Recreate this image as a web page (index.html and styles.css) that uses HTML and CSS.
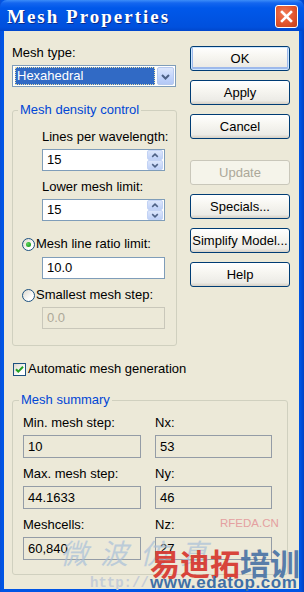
FILE: index.html
```html
<!DOCTYPE html>
<html>
<head>
<meta charset="utf-8">
<link rel="stylesheet" href="styles.css">
</head>
<body>
<div class="window">
  <div class="titlebar">
    <span class="title">Mesh Properties</span>
    <span class="close"><svg width="21" height="21" viewBox="0 0 21 21"><path d="M6 6 L15 15 M15 6 L6 15" stroke="#fff" stroke-width="2.6" stroke-linecap="square"/></svg></span>
  </div>
  <div class="client">
    <div class="top">
      <div class="left">
        <div class="label">Mesh type:</div>
        <div class="combo">
          <span class="combo-sel">Hexahedral</span>
          <span class="combo-btn"><svg width="15" height="17" viewBox="0 0 15 17"><path d="M4 7 L7.5 10.5 L11 7" fill="none" stroke="#4D6185" stroke-width="2"/></svg></span>
        </div>
        <fieldset class="group density">
          <legend>Mesh density control</legend>
          <div class="label ind">Lines per wavelength:</div>
          <div class="edit spin ind"><span class="val">15</span>
            <span class="spinbtns">
              <span class="sb"><svg width="15" height="9" viewBox="0 0 15 9"><path d="M4.5 6 L7.5 3 L10.5 6" fill="none" stroke="#4D6185" stroke-width="1.6"/></svg></span>
              <span class="sb"><svg width="15" height="9" viewBox="0 0 15 9"><path d="M4.5 3 L7.5 6 L10.5 3" fill="none" stroke="#4D6185" stroke-width="1.6"/></svg></span>
            </span>
          </div>
          <div class="label ind gap8">Lower mesh limit:</div>
          <div class="edit spin ind"><span class="val">15</span>
            <span class="spinbtns">
              <span class="sb"><svg width="15" height="9" viewBox="0 0 15 9"><path d="M4.5 6 L7.5 3 L10.5 6" fill="none" stroke="#4D6185" stroke-width="1.6"/></svg></span>
              <span class="sb"><svg width="15" height="9" viewBox="0 0 15 9"><path d="M4.5 3 L7.5 6 L10.5 3" fill="none" stroke="#4D6185" stroke-width="1.6"/></svg></span>
            </span>
          </div>
          <div class="radio-row gap15"><span class="radio on"><span class="dot"></span></span><span>Mesh line ratio limit:</span></div>
          <div class="edit ind gap5"><span class="val">10.0</span></div>
          <div class="radio-row gap8"><span class="radio"></span><span>Smallest mesh step:</span></div>
          <div class="edit disabled ind"><span class="val">0.0</span></div>
        </fieldset>
      </div>
      <div class="buttons">
        <div class="btn default">OK</div>
        <div class="btn">Apply</div>
        <div class="btn">Cancel</div>
        <div class="btn disabled gap21">Update</div>
        <div class="btn">Specials...</div>
        <div class="btn">Simplify Model...</div>
        <div class="btn">Help</div>
      </div>
    </div>
    <div class="check-row">
      <span class="checkbox"><svg width="11" height="11" viewBox="0 0 11 11"><path d="M2 5.2 L4.3 7.6 L9 2.8" fill="none" stroke="#21A121" stroke-width="2"/></svg></span>
      <span>Automatic mesh generation</span>
    </div>
    <fieldset class="group summary">
      <legend>Mesh summary</legend>
      <div class="grid">
        <div class="label">Min. mesh step:</div>
        <div class="label">Nx:</div>
        <div class="edit ro"><span class="val">10</span></div>
        <div class="edit ro"><span class="val">53</span></div>
        <div class="label gap8">Max. mesh step:</div>
        <div class="label gap8">Ny:</div>
        <div class="edit ro"><span class="val">44.1633</span></div>
        <div class="edit ro"><span class="val">46</span></div>
        <div class="label gap8">Meshcells:</div>
        <div class="label gap8">Nz:</div>
        <div class="edit ro"><span class="val">60,840</span></div>
        <div class="edit ro"><span class="val">27</span></div>
      </div>
    </fieldset>
  </div>
  <div class="wm wm-wave">微　波　仿　真</div>
  <div class="wm wm-rf">RFEDA.CN</div>
  <div class="wm wm-http">http://</div>
  <div class="wm wm-cn"><span class="red">易迪拓</span><span class="blue">培训</span></div>
  <div class="wm wm-url">www.edatop.com</div>
</div>
</body>
</html>
```

FILE: styles.css
```css
html, body {
  margin: 0;
  padding: 0;
  background: #ECE9D8;
}

.window {
  position: relative;
  width: 304px;
  height: 592px;
  box-sizing: border-box;
  display: flex;
  flex-direction: column;
  background: linear-gradient(to right, #0A4FD6 0px, #0055E5 2px, #0055E5 300px, #0042C4 304px);
  padding: 0 5px 3px 4px;
  overflow: hidden;
  font-family: "Liberation Sans", Arial, sans-serif;
  font-size: 13px;
  color: #000;
}

.titlebar {
  height: 31px;
  margin: 0 -5px 0 -4px;
  display: flex;
  justify-content: space-between;
  align-items: flex-start;
  padding: 0 6px 0 7px;
  background: linear-gradient(to bottom, #3C8DF8 0px, #1466EF 3px, #0058EA 8px, #0054E3 18px, #0050DD 27px, #0046CC 31px);
  border-radius: 7px 7px 0 0;
}

.title {
  font-family: "Liberation Serif", "Times New Roman", serif;
  font-weight: bold;
  font-size: 19px;
  line-height: 19px;
  letter-spacing: 2px;
  color: #fff;
  margin-top: 7px;
  text-shadow: 1px 1px 0 #0B2C8C;
}

.close {
  margin-top: 5px;
  width: 21px;
  height: 21px;
  border: 1px solid #fff;
  border-radius: 3px;
  background: radial-gradient(circle at 40% 35%, #F07A55 0%, #E2542C 55%, #C0401C 100%);
  display: flex;
}

.client {
  flex: 1;
  background: #ECE9D8;
  padding: 14px 0 0 8px;
}

.top {
  display: flex;
  gap: 13px;
}

.left {
  width: 165px;
  display: flex;
  flex-direction: column;
}

.label {
  line-height: 16px;
  height: 16px;
  white-space: nowrap;
}

.combo {
  margin-top: 4px;
  width: 164px;
  height: 22px;
  box-sizing: border-box;
  border: 1px solid #7F9DB9;
  background: #fff;
  padding: 1px 1px 1px 2px;
  display: flex;
  gap: 2px;
}

.combo-sel {
  flex: 1;
  background: #316AC5;
  color: #fff;
  line-height: 18px;
  padding-left: 2px;
  outline: 1px dotted #E8E0A8;
  outline-offset: -1px;
}

.combo-btn {
  width: 17px;
  height: 18px;
  box-sizing: border-box;
  border: 1px solid #B7C9EE;
  border-radius: 2px;
  background: linear-gradient(to bottom, #DCE6FB, #C1D3FB 60%, #B3C8F5);
  display: flex;
  justify-content: center;
}

.group {
  margin: 0;
  border: 1px solid #D0D0BF;
  border-radius: 3px;
  min-width: 0;
}

.group legend {
  color: #0046D5;
  line-height: 16px;
  padding: 0 2px;
}

.density {
  margin-top: 15px;
  padding: 11px 0 16px 9px;
}

.density legend {
  margin-left: -4px;
}

.ind {
  margin-left: 20px;
}

.gap5 { margin-top: 5px; }
.gap8 { margin-top: 8px; }
.gap15 { margin-top: 15px; }
.gap21 { margin-top: 21px; }

.edit {
  width: 123px;
  height: 22px;
  box-sizing: border-box;
  border: 1px solid #7F9DB9;
  background: #fff;
  display: flex;
  align-items: center;
  justify-content: space-between;
  margin-top: 4px;
}

.edit .val {
  padding-left: 4px;
  line-height: 20px;
}

.edit.gap5 { margin-top: 5px; }

.edit.disabled {
  background: #ECE9D8;
  border-color: #C9C7BA;
  color: #ACA899;
}

.spinbtns {
  display: flex;
  flex-direction: column;
  gap: 0;
  margin-right: 1px;
}

.sb {
  width: 16px;
  height: 10px;
  box-sizing: border-box;
  border: 1px solid #C3D3F5;
  border-radius: 2px;
  background: linear-gradient(to bottom, #DCE6FB, #BFD1F8);
  display: flex;
  justify-content: center;
  align-items: center;
}

.radio-row {
  display: flex;
  align-items: center;
  gap: 1px;
  line-height: 16px;
  white-space: nowrap;
}

.radio {
  width: 13px;
  height: 13px;
  box-sizing: border-box;
  border: 1px solid #1C5180;
  border-radius: 50%;
  background: linear-gradient(135deg, #DCD7CB, #FFFFFF 70%);
  display: flex;
  justify-content: center;
  align-items: center;
}

.radio .dot {
  width: 5px;
  height: 5px;
  border-radius: 50%;
  background: radial-gradient(circle at 35% 35%, #5FD35F, #21A121 70%);
}

.buttons {
  width: 100px;
  margin-top: 1px;
  display: flex;
  flex-direction: column;
}

.btn {
  height: 25px;
  box-sizing: border-box;
  border: 1px solid #003C74;
  border-radius: 3px;
  background: linear-gradient(to bottom, #FFFFFF 0%, #F7F6F1 40%, #ECEBE6 85%, #D6D0C5 100%);
  text-align: center;
  line-height: 23px;
  white-space: nowrap;
  margin-bottom: 9px;
}

.btn.gap21 { margin-top: 12px; }

.btn.default {
  box-shadow: inset 0 0 0 1px #CEE7FF, inset 0 -1px 0 2px #9DB9EB;
}

.btn.disabled {
  border-color: #C9C7BA;
  color: #ACA899;
  background: #F5F4EA;
}

.check-row {
  margin-top: 15px;
  margin-left: 1px;
  display: flex;
  align-items: center;
  gap: 2px;
  line-height: 16px;
}

.checkbox {
  width: 13px;
  height: 13px;
  box-sizing: border-box;
  border: 1px solid #1C5180;
  background: linear-gradient(135deg, #DCD7CB, #FFFFFF 70%);
  display: flex;
  justify-content: center;
  align-items: center;
}

.summary {
  margin-top: 15px;
  width: 276px;
  box-sizing: border-box;
  padding: 7px 0 14px 10px;
}

.summary legend {
  margin-left: -4px;
}

.grid {
  display: grid;
  grid-template-columns: 118px 117px;
  column-gap: 14px;
}

.edit.ro {
  width: auto;
  height: 23px;
  background: #ECE9D8;
  border-color: #949CA6;
}

.wm {
  position: absolute;
  white-space: nowrap;
  pointer-events: none;
}

.wm-cn {
  left: 150px;
  top: 544px;
  font-family: "Noto Sans CJK SC", sans-serif;
  font-weight: bold;
  font-size: 30px;
  line-height: 36px;
  opacity: 0.92;
}

.wm-cn .red { color: #D7372E; }
.wm-cn .blue { color: #4C74A6; }

.wm-url {
  left: 150px;
  top: 574px;
  font-family: "Liberation Sans", Arial, sans-serif;
  font-weight: bold;
  font-size: 17px;
  line-height: 18px;
  letter-spacing: 0.6px;
  color: #3F6FA6;
}

.wm-rf {
  left: 220px;
  top: 516px;
  font-size: 11.5px;
  line-height: 14px;
  color: #E4A0A0;
}

.wm-http {
  left: 90px;
  top: 575px;
  font-family: "Liberation Mono", monospace;
  font-weight: bold;
  font-size: 14px;
  line-height: 16px;
  color: #C6CDD6;
}

.wm-wave {
  left: 60px;
  top: 536px;
  font-family: "Noto Sans CJK SC", sans-serif;
  font-size: 28px;
  line-height: 32px;
  font-style: italic;
  color: #A9C0D8;
  opacity: 0.7;
  letter-spacing: -8px;
}
```
